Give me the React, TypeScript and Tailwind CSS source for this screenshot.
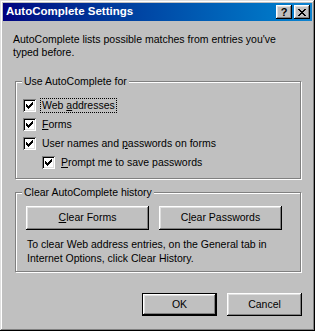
import React from "react";

const raised =
  "shadow-[inset_-1px_-1px_#000,inset_1px_1px_#fff,inset_-2px_-2px_#808080,inset_2px_2px_#dfdfdf]";

function Check() {
  return (
    <div className="relative h-[13px] w-[13px] flex-none bg-white shadow-[inset_1px_1px_#808080,inset_-1px_-1px_#fff,inset_2px_2px_#000,inset_-2px_-2px_#dfdfdf]">
      <svg width="13" height="13" viewBox="0 0 13 13" shapeRendering="crispEdges" className="absolute inset-0">
        <rect x="9" y="3" width="1" height="1" />
        <rect x="8" y="4" width="2" height="1" />
        <rect x="3" y="5" width="1" height="1" />
        <rect x="7" y="5" width="3" height="1" />
        <rect x="3" y="6" width="2" height="1" />
        <rect x="6" y="6" width="3" height="1" />
        <rect x="3" y="7" width="5" height="1" />
        <rect x="4" y="8" width="3" height="1" />
        <rect x="5" y="9" width="1" height="1" />
      </svg>
    </div>
  );
}

function CheckRow({
  children,
  focused,
  indent,
}: {
  children: React.ReactNode;
  focused?: boolean;
  indent?: boolean;
}) {
  return (
    <div className={`flex h-[13px] items-center ${indent ? "ml-[19px]" : ""}`}>
      <Check />
      <span
        className={`ml-[4px] flex h-[15px] items-center border px-[1px] ${
          focused ? "border-dotted border-black" : "border-transparent"
        }`}
      >
        <span>{children}</span>
      </span>
    </div>
  );
}

function Frame({
  title,
  className,
  children,
}: {
  title: string;
  className: string;
  children: React.ReactNode;
}) {
  return (
    <div
      className={`relative ml-[12px] w-[286px] border border-[#808080] shadow-[inset_1px_1px_#fff,1px_1px_#fff] ${className}`}
    >
      <span className="absolute -top-[8px] left-[6px] bg-[#c0c0c0] px-[2px] leading-[14px]">
        {title}
      </span>
      {children}
    </div>
  );
}

function Button({
  children,
  className,
}: {
  children: React.ReactNode;
  className: string;
}) {
  return (
    <div className={`flex items-center justify-center bg-[#c0c0c0] ${raised} ${className}`}>
      <span>{children}</span>
    </div>
  );
}

export default function App() {
  return (
    <div className="flex h-[331px] w-[315px] flex-col bg-[#c0c0c0] p-[3px] font-['Liberation_Sans',Arial,sans-serif] text-[10.5px] text-black shadow-[inset_-1px_-1px_#000,inset_1px_1px_#dfdfdf,inset_-2px_-2px_#808080,inset_2px_2px_#fff]">
      {/* title bar */}
      <div className="flex h-[18px] items-center bg-linear-to-r from-[#000080] to-[#1084d0] pl-[3px] pr-[2px]">
        <span className="flex-1 text-[11.5px] font-bold text-white">AutoComplete Settings</span>
        <div className={`flex h-[14px] w-[16px] items-center justify-center bg-[#c0c0c0] ${raised}`}>
          <span className="text-[11px] leading-none font-bold">?</span>
        </div>
        <div className={`ml-[2px] flex h-[14px] w-[16px] items-center justify-center bg-[#c0c0c0] ${raised}`}>
          <svg width="8" height="7" viewBox="0 0 8 7" shapeRendering="crispEdges">
            <path d="M0 0h2v1h-2zM6 0h2v1h-2zM1 1h2v1h-2zM5 1h2v1h-2zM2 2h4v1h-4zM3 3h2v1h-2zM2 4h4v1h-4zM1 5h2v1h-2zM5 5h2v1h-2zM0 6h2v1h-2zM6 6h2v1h-2z" />
          </svg>
        </div>
      </div>

      <p className="mt-[12px] ml-[10px] leading-[13px]">
        AutoComplete lists possible matches from entries you've
        <br />
        typed before.
      </p>

      <Frame title="Use AutoComplete for" className="mt-[22px] h-[98px] pt-[17px] pl-[7px]">
        <div className="flex flex-col gap-[6px]">
          <CheckRow focused>
            Web <span className="underline">a</span>ddresses
          </CheckRow>
          <CheckRow>
            <span className="underline">F</span>orms
          </CheckRow>
          <CheckRow>
            User names and <span className="underline">p</span>asswords on forms
          </CheckRow>
          <CheckRow indent>
            <span className="underline">P</span>rompt me to save passwords
          </CheckRow>
        </div>
      </Frame>

      <Frame title="Clear AutoComplete history" className="mt-[13px] h-[80px] pt-[13px] pl-[10px]">
        <div className="flex gap-[10px]">
          <Button className="h-[24px] w-[123px]">
            <span className="underline">C</span>lear Forms
          </Button>
          <Button className="h-[24px] w-[123px]">
            C<span className="underline">l</span>ear Passwords
          </Button>
        </div>
        <p className="mt-[7px] ml-[1px] leading-[14px]">
          To clear Web address entries, on the General tab in
          <br />
          Internet Options, click Clear History.
        </p>
      </Frame>

      <div className="mt-[21px] flex justify-end gap-[10px] pr-[10px]">
        <div className="border border-black">
          <Button className="h-[21px] w-[73px]">OK</Button>
        </div>
        <Button className="h-[23px] w-[75px]">Cancel</Button>
      </div>
    </div>
  );
}
